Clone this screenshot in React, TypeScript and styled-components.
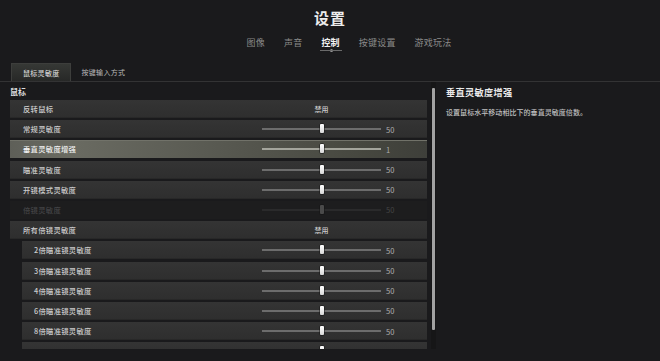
import React from 'react';
import styled, { createGlobalStyle, css } from 'styled-components';

const GlobalStyle = createGlobalStyle`
  html, body {
    margin: 0;
    padding: 0;
    background: #1a1a1c;
  }
  body {
    width: 660px;
    height: 361px;
    overflow: hidden;
    font-family: "Noto Sans CJK SC", "Noto Sans", sans-serif;
    color: #c8c8c8;
  }
`;

const Page = styled.div`
  width: 660px;
  height: 361px;
  display: flex;
  flex-direction: column;
  background: #1a1a1c;
`;

const Header = styled.header`
  display: flex;
  flex-direction: column;
  align-items: center;
  padding-top: 8px;
`;

const Title = styled.h1`
  margin: 0;
  font-size: 15px;
  line-height: 20px;
  font-weight: 700;
  letter-spacing: 1px;
  color: #ececec;
`;

/* the tab strip is centred on the active tab, so it is pushed right */
const Nav = styled.nav`
  display: flex;
  gap: 19px;
  margin-top: 9px;
  margin-left: 38px;
  padding-bottom: 4px;
`;

const NavItem = styled.span<{ $active?: boolean }>`
  position: relative;
  font-size: 9px;
  line-height: 12px;
  letter-spacing: 0.2px;
  color: #8a8a8a;
  ${(p) =>
    p.$active &&
    css`
      color: #f2f2f2;
      font-weight: 700;
      &::after {
        content: '';
        position: absolute;
        left: -1px;
        right: -2px;
        bottom: -2px;
        height: 1px;
        background: #6a6a6a;
      }
      &::before {
        content: '';
        position: absolute;
        left: 50%;
        bottom: -3px;
        width: 3px;
        height: 3px;
        margin-left: -1px;
        border-radius: 50%;
        background: #9a9a9a;
      }
    `}
`;

const SubTabs = styled.div`
  display: flex;
  margin-top: 10px;
  padding-left: 11px;
  height: 18px;
  border-bottom: 1px solid #333334;
`;

const SubTab = styled.div<{ $active?: boolean }>`
  display: flex;
  align-items: center;
  padding: 0 10px 0 11px;
  font-size: 7px;
  letter-spacing: 0.3px;
  color: #b8b8b8;
  ${(p) =>
    p.$active &&
    css`
      color: #e4e4e4;
      background: linear-gradient(180deg, #363835 0%, #272827 100%);
      border: 1px solid #3d3e3c;
      border-bottom: none;
    `}
`;

const Content = styled.div`
  display: flex;
  flex: 1;
  min-height: 0;
`;

const LeftPane = styled.div`
  display: flex;
  gap: 4px;
  padding-left: 10px;
  width: 430px;
`;

const ListColumn = styled.div`
  width: 417px;
  display: flex;
  flex-direction: column;
`;

const SectionLabel = styled.div`
  margin: 5px 0 3px 0;
  font-size: 8px;
  line-height: 10px;
  font-weight: 700;
  color: #dcdcdc;
`;

const List = styled.div`
  height: 249px;
  overflow: hidden;
  display: flex;
  flex-direction: column;
  gap: 2.2px;
`;

const Row = styled.div<{ $sub?: boolean; $selected?: boolean; $disabled?: boolean }>`
  flex: 0 0 18px;
  display: flex;
  align-items: center;
  margin-left: ${(p) => (p.$sub ? '12px' : '0')};
  padding-left: ${(p) => (p.$sub ? '12px' : '13px')};
  background: linear-gradient(180deg, #343434 0%, #2e2e2e 100%);
  box-shadow: inset 0 -1px 0 #282828;
  ${(p) =>
    p.$selected &&
    css`
      background: linear-gradient(90deg, #5e5f58 0%, #6a6b62 14%, #585951 50%, #46473f 85%, #3e3f3a 100%);
      box-shadow: inset 0 1px 0 #717269;
    `}
  ${(p) =>
    p.$disabled &&
    css`
      background: #1d1d1e;
      box-shadow: none;
    `}
`;

const Label = styled.span<{ $selected?: boolean; $disabled?: boolean }>`
  flex: 1;
  font-size: 7.3px;
  font-weight: 500;
  letter-spacing: 0.3px;
  color: ${(p) => (p.$disabled ? '#444446' : p.$selected ? '#f2f2f2' : '#cdcdcd')};
`;

const Control = styled.div`
  width: 165px;
  display: flex;
  align-items: center;
  gap: 5px;
`;

const Track = styled.div<{ $selected?: boolean; $disabled?: boolean }>`
  position: relative;
  width: 119px;
  height: 2px;
  background: ${(p) => (p.$disabled ? '#2a2a2b' : p.$selected ? '#a4a59c' : '#6c6c6c')};
`;

const Thumb = styled.div<{ $disabled?: boolean }>`
  position: absolute;
  top: -4px;
  width: 4px;
  height: 9px;
  margin-left: -2px;
  border-radius: 1px;
  background: ${(p) => (p.$disabled ? '#4a4a4a' : 'linear-gradient(180deg, #ffffff 0%, #d8d8d8 100%)')};
  box-shadow: 0 0 0 0.5px #151515;
`;

const Value = styled.span<{ $disabled?: boolean }>`
  font-size: 7.5px;
  color: ${(p) => (p.$disabled ? '#444' : '#aeaeae')};
`;

const Toggle = styled.span`
  width: 119px;
  text-align: center;
  font-size: 7px;
  font-weight: 500;
  color: #cdcdcd;
`;

const ScrollTrack = styled.div`
  width: 5px;
  padding-top: 6px;
  display: flex;
  justify-content: center;
  background: #161617;
  height: 261px;
`;

const ScrollThumb = styled.div`
  width: 3px;
  height: 242px;
  border-radius: 1px;
  background: #a2a2a2;
`;

const RightPane = styled.aside`
  flex: 1;
  padding-left: 6px;
  padding-top: 4px;
`;

const InfoTitle = styled.div`
  font-size: 9.2px;
  line-height: 12px;
  font-weight: 700;
  letter-spacing: 0.3px;
  color: #eaeaea;
`;

const InfoText = styled.p`
  margin: 9px 0 0 0;
  font-size: 7px;
  font-weight: 500;
  letter-spacing: 0.05px;
  color: #c0c0c0;
`;

type Item = {
  label: string;
  kind: 'toggle' | 'slider';
  value?: string;
  sub?: boolean;
  selected?: boolean;
  disabled?: boolean;
  clipped?: boolean;
};

const items: Item[] = [
  { label: '反转鼠标', kind: 'toggle', value: '禁用' },
  { label: '常规灵敏度', kind: 'slider', value: '50' },
  { label: '垂直灵敏度增强', kind: 'slider', value: '1', selected: true },
  { label: '瞄准灵敏度', kind: 'slider', value: '50' },
  { label: '开镜模式灵敏度', kind: 'slider', value: '50' },
  { label: '倍镜灵敏度', kind: 'slider', value: '50', disabled: true },
  { label: '所有倍镜灵敏度', kind: 'toggle', value: '禁用' },
  { label: '2倍瞄准镜灵敏度', kind: 'slider', value: '50', sub: true },
  { label: '3倍瞄准镜灵敏度', kind: 'slider', value: '50', sub: true },
  { label: '4倍瞄准镜灵敏度', kind: 'slider', value: '50', sub: true },
  { label: '6倍瞄准镜灵敏度', kind: 'slider', value: '50', sub: true },
  { label: '8倍瞄准镜灵敏度', kind: 'slider', value: '50', sub: true },
  // only the top edge of this row is in view, its text is below the fold
  { label: '15倍瞄准镜灵敏度', kind: 'slider', value: '50', sub: true, clipped: true },
];

const navItems = ['图像', '声音', '控制', '按键设置', '游戏玩法'];

const SettingRow = ({ item }: { item: Item }) => (
  <Row $sub={item.sub} $selected={item.selected} $disabled={item.disabled}>
    <Label $selected={item.selected} $disabled={item.disabled}>
      {item.clipped ? null : item.label}
    </Label>
    <Control>
      {item.kind === 'toggle' ? (
        <Toggle>{item.value}</Toggle>
      ) : (
        <>
          <Track $selected={item.selected} $disabled={item.disabled}>
            <Thumb $disabled={item.disabled} style={{ left: '50%' }} />
          </Track>
          <Value $disabled={item.disabled}>{item.clipped ? null : item.value}</Value>
        </>
      )}
    </Control>
  </Row>
);

const App = () => (
  <Page>
    <GlobalStyle />
    <Header>
      <Title>设置</Title>
      <Nav>
        {navItems.map((n) => (
          <NavItem key={n} $active={n === '控制'}>
            {n}
          </NavItem>
        ))}
      </Nav>
    </Header>
    <SubTabs>
      <SubTab $active>鼠标灵敏度</SubTab>
      <SubTab>按键输入方式</SubTab>
    </SubTabs>
    <Content>
      <LeftPane>
        <ListColumn>
          <SectionLabel>鼠标</SectionLabel>
          <List>
            {items.map((it) => (
              <SettingRow key={it.label} item={it} />
            ))}
          </List>
        </ListColumn>
        <ScrollTrack>
          <ScrollThumb />
        </ScrollTrack>
      </LeftPane>
      <RightPane>
        <InfoTitle>垂直灵敏度增强</InfoTitle>
        <InfoText>设置鼠标水平移动相比下的垂直灵敏度倍数。</InfoText>
      </RightPane>
    </Content>
  </Page>
);

export default App;
